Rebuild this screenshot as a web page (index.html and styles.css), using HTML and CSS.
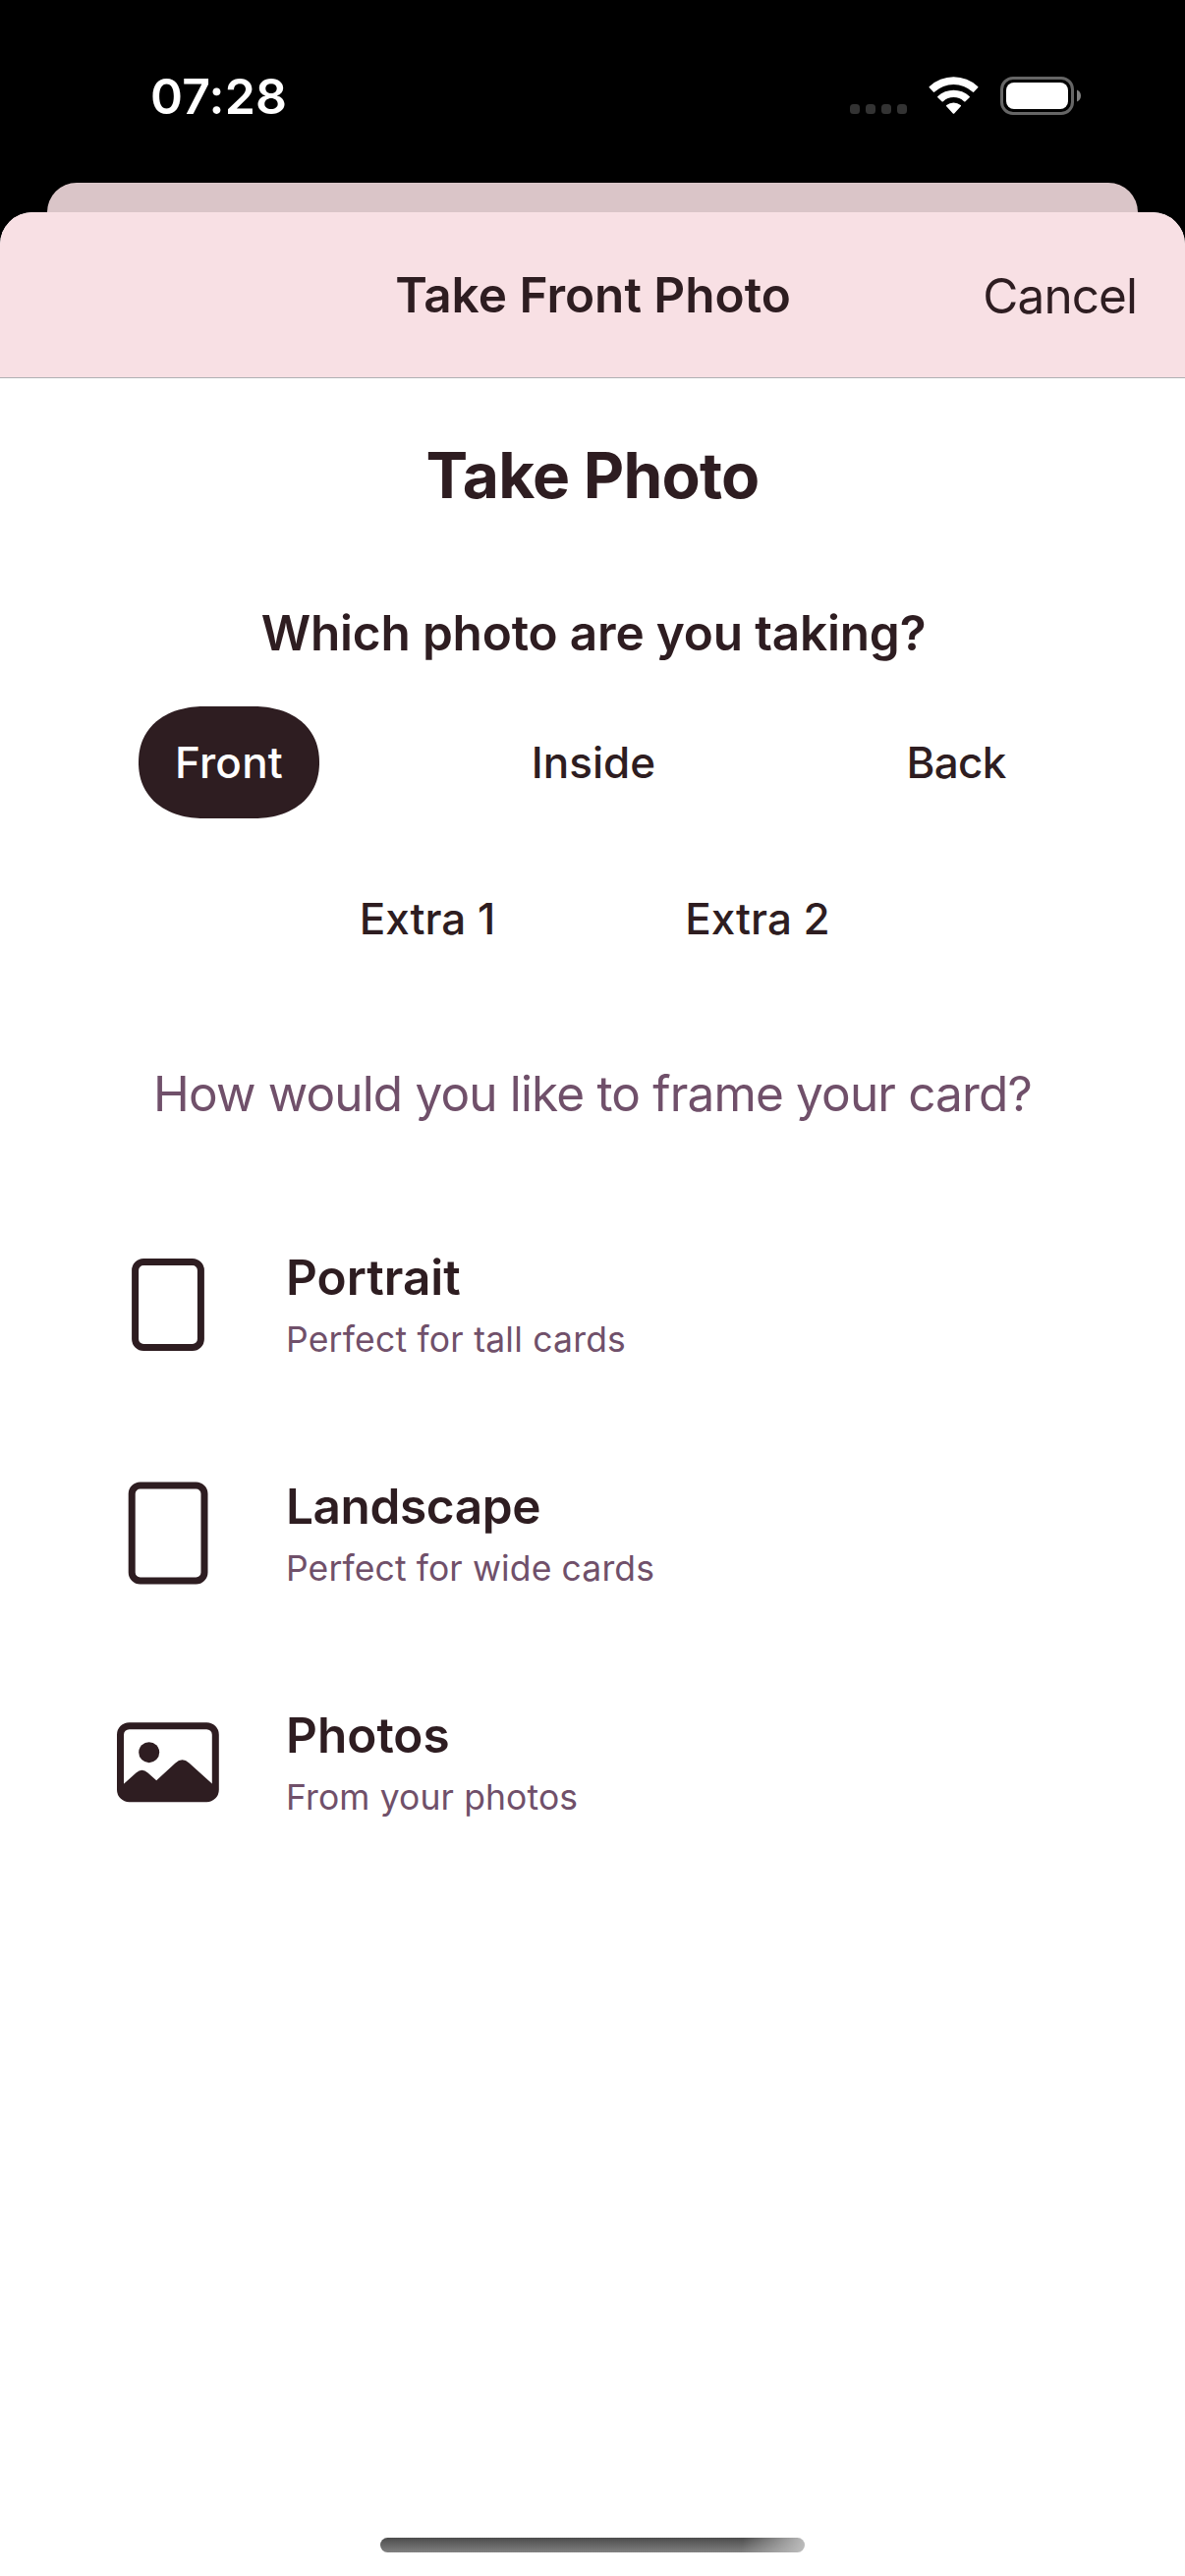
FILE: index.html
```html
<!DOCTYPE html>
<html lang="en">
<head>
<meta charset="utf-8">
<title>Take Front Photo</title>
<link rel="stylesheet" href="styles.css">
</head>
<body>
<div class="screen">
  <div class="status-bar">
    <span class="time">07:28</span>
    <div class="indicators">
      <svg class="cellular" width="58" height="40" viewBox="0 0 58 40">
        <rect x="0" y="28" width="10" height="10" rx="3.5"/>
        <rect x="16" y="28" width="10" height="10" rx="3.5"/>
        <rect x="32" y="28" width="10" height="10" rx="3.5"/>
        <rect x="48" y="28" width="10" height="10" rx="3.5"/>
      </svg>
      <svg class="wifi" width="51" height="40" viewBox="0 0 51 40">
        <path d="M0.8 11.2Q0.2 10.6 0.9 10A36 36 0 0 1 50.1 10Q50.8 10.6 50.2 11.2L46.2 15.6Q45.5 16.3 44.8 15.6A28.5 28.5 0 0 0 6.200 15.6Q5.500 16.300 4.800 15.600Z"/>
        <path d="M9.300 21.300Q8.700 20.600 9.400 20A23.800 23.800 0 0 1 41.600 20Q42.300 20.600 41.700 21.300L37.500 25.200Q36.800 25.900 36.100 25.200A15.800 15.800 0 0 0 14.900 25.200Q14.200 25.900 13.500 25.200Z"/>
        <path d="M18.200 30.200Q17.600 29.600 18.300 29A11.200 11.200 0 0 1 32.700 29Q33.400 29.600 32.800 30.200L26.200 37.500Q25.500 38.200 24.800 37.500Z"/>
      </svg>
      <svg class="battery" width="82" height="40" viewBox="0 0 82 40">
        <rect class="battery-shell" x="1.500" y="1.500" width="72" height="36" rx="11.500"/>
        <rect class="battery-charge" x="6" y="6" width="63" height="27" rx="8"/>
        <path class="battery-cap" d="M78 13.500C80.500 14.500 82 16.800 82 19.500S80.500 24.500 78 25.500Z"/>
      </svg>
    </div>
  </div>
  <div class="sheet-behind"></div>
  <main class="sheet">
    <header class="nav-bar">
      <span class="nav-title">Take Front Photo</span>
      <span class="nav-cancel">Cancel</span>
    </header>
    <h1 class="heading">Take Photo</h1>
    <h2 class="question">Which photo are you taking?</h2>
    <div class="choices">
      <div class="choice-row">
        <div class="choice"><span class="pill pill-selected front">Front</span></div>
        <div class="choice"><span class="pill inside">Inside</span></div>
        <div class="choice"><span class="pill back">Back</span></div>
      </div>
      <div class="choice-row choice-row-extra">
        <div class="choice"><span class="pill">Extra 1</span></div>
        <div class="choice"><span class="pill">Extra 2</span></div>
      </div>
    </div>
    <p class="prompt">How would you like to frame your card?</p>
    <div class="options">
      <div class="option">
        <svg class="option-icon" width="104" height="106" viewBox="0 0 104 106">
          <rect class="frame" x="18.600" y="9.500" width="66.800" height="87" rx="8.500"/>
        </svg>
        <div class="option-text">
          <span class="option-title">Portrait</span>
          <span class="option-note tall">Perfect for tall cards</span>
        </div>
      </div>
      <div class="option">
        <svg class="option-icon" width="104" height="106" viewBox="0 0 104 106">
          <rect class="frame" x="15.200" y="4" width="73.800" height="97" rx="8.500"/>
        </svg>
        <div class="option-text">
          <span class="option-title landscape">Landscape</span>
          <span class="option-note">Perfect for wide cards</span>
        </div>
      </div>
      <div class="option">
        <svg class="option-icon" width="104" height="106" viewBox="0 0 104 106">
          <rect class="frame" x="3.500" y="15.700" width="96.800" height="74" rx="9"/>
          <circle class="solid" cx="32.700" cy="42.700" r="10.500"/>
          <path class="solid" d="M5 76.500L19.500 63.500Q25.500 58.200 31.500 63.500L40.200 71.300L59.500 53.500Q66.500 47 73.500 53.500L99 76.500V86Q99 91 94 91H10Q5 91 5 86Z"/>
        </svg>
        <div class="option-text">
          <span class="option-title">Photos</span>
          <span class="option-note">From your photos</span>
        </div>
      </div>
    </div>
  </main>
  <div class="home-indicator"></div>
</div>
</body>
</html>
```
FILE: styles.css
```css
* {
  box-sizing: border-box;
}

body {
  margin: 0;
  background: #000;
  font-family: Inter, "Liberation Sans", sans-serif;
  color: #2e1d21;
}

.screen {
  position: relative;
  display: flex;
  flex-direction: column;
  width: 1206px;
  height: 2622px;
  overflow: hidden;
  background: #000;
}

.status-bar {
  display: flex;
  align-items: center;
  justify-content: space-between;
  height: 186px;
  padding: 10px 106px 0 153px;
}

.time {
  font-size: 50px;
  line-height: 60px;
  font-weight: 600;
  letter-spacing: 0.2px;
  color: #fff;
}

.indicators {
  display: flex;
}

.cellular {
  fill: #333;
}

.wifi {
  margin-left: 22px;
  fill: #fff;
}

.battery {
  margin-left: 22px;
}

.battery-shell {
  fill: none;
  stroke: #666;
  stroke-width: 3;
}

.battery-charge {
  fill: #fff;
}

.battery-cap {
  fill: #808080;
}

.sheet-behind {
  height: 30px;
  margin: 0 48px;
  border-radius: 32px 32px 0 0;
  background: #dac5c8;
}

.sheet {
  flex: 1;
  display: flex;
  flex-direction: column;
  border-radius: 33px 33px 0 0;
  overflow: hidden;
  background: #fff;
}

.nav-bar {
  display: grid;
  grid-template-columns: 1fr auto 1fr;
  align-items: center;
  height: 169px;
  padding: 0 48px;
  border-bottom: 1px solid #b0b0b3;
  background: #f8e0e4;
}

.nav-title {
  grid-column: 2;
  padding-left: 1px;
  font-size: 49.5px;
  line-height: 60px;
  font-weight: 600;
}

.nav-cancel {
  justify-self: end;
  padding-top: 2px;
  margin-right: 1px;
  font-size: 49.5px;
  line-height: 60px;
  letter-spacing: -0.95px;
}

.heading {
  margin: 59px 0 0;
  text-align: center;
  font-size: 64px;
  line-height: 80px;
  font-weight: 700;
  letter-spacing: -0.8px;
}

.question {
  margin: 90px 0 0;
  padding-left: 2px;
  text-align: center;
  font-size: 49.5px;
  line-height: 60px;
  font-weight: 600;
  letter-spacing: -0.18px;
}

.choices {
  display: flex;
  flex-direction: column;
  gap: 45px;
  margin-top: 45px;
}

.choice-row {
  display: grid;
  grid-template-columns: repeat(3, 370px);
  justify-content: center;
}

.choice-row-extra {
  grid-template-columns: repeat(2, 336px);
}

.choice {
  display: flex;
  justify-content: center;
}

.pill {
  padding: 0 36px;
  border-radius: 68px / 57px;
  font-size: 44px;
  line-height: 114px;
  font-weight: 500;
}

.pill-selected {
  padding: 0 37px;
  background: #2e1d21;
  color: #fff;
  corner-shape: superellipse(1.15);
}

.front {
  letter-spacing: 0.2px;
}

.inside {
  padding-left: 38px;
}

.back {
  letter-spacing: -0.7px;
}

.prompt {
  margin: 91px 0 0;
  text-align: center;
  font-size: 49.5px;
  line-height: 60px;
  letter-spacing: -0.84px;
  color: #70506a;
}

.options {
  display: flex;
  flex-direction: column;
  margin-top: 68px;
  padding: 0 119px;
}

.option {
  display: flex;
  align-items: center;
  gap: 68px;
  height: 233px;
}

.option-icon {
  flex: none;
}

.frame {
  fill: none;
  stroke: #2e1d21;
  stroke-width: 7;
}

.solid {
  fill: #2e1d21;
}

.option-text {
  display: flex;
  flex-direction: column;
  gap: 12px;
}

.option-title {
  font-size: 49.5px;
  line-height: 60px;
  font-weight: 600;
  letter-spacing: 0;
}

.landscape {
  letter-spacing: -0.4px;
}

.option-note {
  font-size: 35.5px;
  line-height: 44px;
  letter-spacing: 0.12px;
  color: #70506a;
}

.tall {
  letter-spacing: 0.22px;
}

.home-indicator {
  position: absolute;
  left: 387px;
  bottom: 24px;
  width: 432px;
  height: 15px;
  border-radius: 8px;
  background:
    linear-gradient(100deg, rgba(190, 190, 190, 0) 85%, #bebebe 100%),
    linear-gradient(#4c4c4c, #808080);
}
```
